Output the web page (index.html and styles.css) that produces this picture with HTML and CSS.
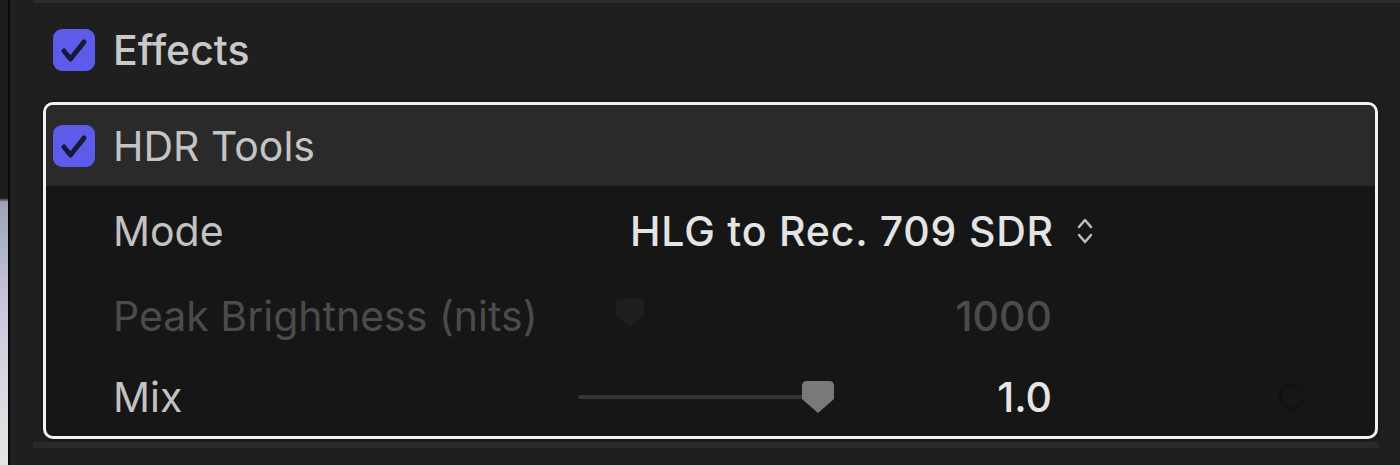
FILE: index.html
```html
<!DOCTYPE html>
<html>
<head>
    <meta charset="UTF-8">
    <title>Inspector - HDR Tools</title>
    <link rel="stylesheet" href="styles.css">
</head>
<body>
  <div class="page">
    <div class="viewer-edge"></div>
    <div class="split"></div>

    <div class="inspector">
      <div class="prev-row"></div>

      <div class="section-head">
        <span class="check">
          <svg viewBox="0 0 42 42"><path d="M11 22 L17.5 30 L31 13"/></svg>
        </span>
        <span class="section-title">Effects</span>
      </div>

      <div class="effect-box">
        <div class="effect-head">
          <span class="check">
            <svg viewBox="0 0 42 42"><path d="M11 22 L17.5 30 L31 13"/></svg>
          </span>
          <span class="effect-title">HDR Tools</span>
        </div>

        <div class="params">
          <!-- Mode -->
          <div class="param">
            <span class="label">Mode</span>
            <span class="popup">
              HLG to Rec. 709 SDR
              <svg class="updown" viewBox="0 0 20 30"><path d="M4 11 L10 4 L16 11 M4 19 L10 26 L16 19"/></svg>
            </span>
          </div>

          <!-- Peak -->
          <div class="param dim">
            <span class="label">Peak Brightness (nits)</span>
            <span class="slider">
              <svg class="knob ghost" viewBox="0 0 32 32"><path d="M5 0 H27 Q32 0 32 5 V18 L16 32 L0 18 V5 Q0 0 5 0Z"/></svg>
            </span>
            <span class="value">1000</span>
          </div>

          <!-- Mix -->
          <div class="param">
            <span class="label">Mix</span>
            <span class="slider">
              <span class="track"></span>
              <svg class="knob" viewBox="0 0 32 32"><path d="M5 0 H27 Q32 0 32 5 V18 L16 32 L0 18 V5 Q0 0 5 0Z"/></svg>
            </span>
            <span class="value">1.0</span>
            <svg class="reset" viewBox="0 0 40 40"><path d="M29 12 A12 12 0 1 0 32 22 M29 5 V12 H22"/></svg>
          </div>
        </div>
      </div>

      <div class="next-row"></div>
    </div>
  </div>
</body>
</html>
```

FILE: styles.css
```css
html, body {
    margin: 0;
    height: 100%;
}
body {
    background-color: #202020;
    font-family: Inter, "Noto Sans", sans-serif;
    overflow: hidden;
}
.page {
    display: flex;
    height: 465px;
}
.viewer-edge {
    width: 8px;
    background: linear-gradient(to bottom, #1c1c1c 0, #1c1c1c 198px, #9fa3b8 202px, #c6c6dc 300px, #d8d8e0 380px, #e4e4e4 465px);
}
.split {
    width: 2px;
    background-color: #080808;
}
.inspector {
    flex: 1;
    display: flex;
    flex-direction: column;
    background-color: #1f1f1f;
}
.prev-row {
    height: 3px;
    margin-left: 23px;
    background-color: #2c2c2c;
}

/* checkbox */
.check {
    width: 42px;
    height: 42px;
    border-radius: 9px;
    background-color: #5d5bea;
    display: flex;
    flex-shrink: 0;
}
.check svg {
    width: 42px;
    height: 42px;
}
.check path {
    fill: none;
    stroke: #171a36;
    stroke-width: 5;
    stroke-linecap: round;
    stroke-linejoin: round;
}

.section-head {
    height: 94px;
    display: flex;
    align-items: center;
    gap: 18px;
    padding-left: 43px;
}
.section-title {
    font-size: 41px;
    color: #c9c9c9;
    font-weight: 500;
}

.effect-box {
    margin: 5px 22px 0 33px;
    border: 3px solid #f2f2f2;
    border-radius: 10px;
    overflow: hidden;
    background-color: #161616;
    box-shadow: 0 0 4px #111;
}
.effect-head {
    height: 81px;
    display: flex;
    align-items: center;
    gap: 18px;
    padding-left: 7px;
    background-color: #2a2a2a;
}
.effect-title {
    font-size: 41px;
    color: #c4c4c4;
}

.params {
    padding-top: 2px;
}
.param {
    height: 85px;
    display: grid;
    grid-template-columns: 465px 272px 202px 1fr;
    align-items: center;
    padding-left: 67px;
}
.param:last-child {
    height: 78px;
}
.label {
    font-size: 41px;
    color: #c2c2c2;
}
.dim .label, .dim .value {
    color: #4b4b4b;
}
.popup {
    grid-column: 2 / 5;
    padding-left: 52px;
    font-size: 41px;
    letter-spacing: 0.8px;
    color: #e4e4e4;
    font-weight: 500;
    display: flex;
    align-items: center;
    gap: 21px;
}
.updown {
    width: 20px;
    height: 30px;
}
.updown path {
    fill: none;
    stroke: #bdbdbd;
    stroke-width: 2.5;
    stroke-linecap: round;
    stroke-linejoin: round;
}
.slider {
    position: relative;
    height: 40px;
    display: flex;
    align-items: center;
}
.track {
    width: 240px;
    height: 4px;
    border-radius: 2px;
    background-color: #353535;
}
.knob {
    position: absolute;
    left: 224px;
    top: 4px;
    width: 32px;
    height: 32px;
}
.knob path {
    fill: #797979;
}
.knob.ghost {
    left: 38px;
    top: 1px;
    width: 28px;
}
.knob.ghost path {
    fill: #1f1f1f;
}
.value {
    text-align: right;
    font-size: 41px;
    color: #e6e6e6;
    font-weight: 500;
}
.reset {
    width: 40px;
    height: 40px;
    margin-left: 220px;
}
.reset path {
    fill: none;
    stroke: #121212;
    stroke-width: 4;
}

.next-row {
    height: 6px;
    margin: 3px 22px 0 23px;
    background-color: #292929;
}
```
